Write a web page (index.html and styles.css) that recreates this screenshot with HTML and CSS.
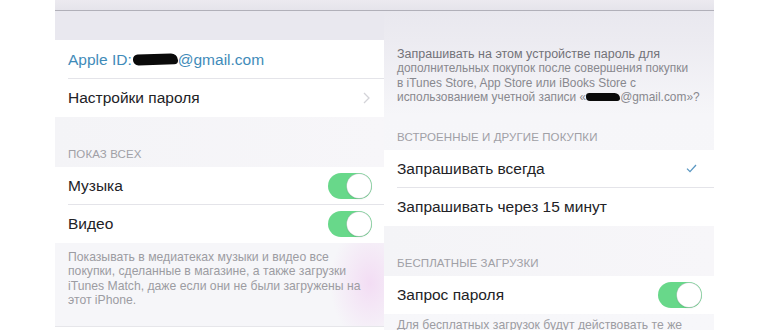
FILE: index.html
```html
<!DOCTYPE html>
<html lang="ru">
<head>
<meta charset="utf-8">
<link rel="stylesheet" href="styles.css">
</head>
<body>
<div class="screens">
  <section class="panel panel-left">
    <div class="topbar"></div>
    <div class="gap gap-top"></div>
    <div class="group">
      <div class="row row-first row-sep"><span class="blue">Apple ID:<span class="blot blot-a"></span>@gmail.com</span></div>
      <div class="row"><span>Настройки пароля</span>
        <svg class="chev" width="7" height="12" viewBox="0 0 7 12"><path d="M1 1l5 5-5 5" fill="none" stroke="#d3d3d8" stroke-width="1.3"/></svg>
      </div>
    </div>
    <div class="gap gap-header"><div class="header">ПОКАЗ ВСЕХ</div></div>
    <div class="group">
      <div class="row row-sep"><span>Музыка</span><span class="toggle"><span class="knob"></span></span></div>
      <div class="row"><span>Видео</span><span class="toggle"><span class="knob"></span></span></div>
    </div>
    <div class="footer footer-left">Показывать в медиатеках музыки и видео все<br>покупки, сделанные в магазине, а также загрузки<br>iTunes Match, даже если они не были загружены на<br>этот iPhone.</div>
  </section>
  <section class="panel panel-right">
    <div class="topbar"></div>
    <div class="desc-area">
      <div class="desc"><span class="desc-first">Запрашивать на этом устройстве пароль для</span><br>дополнительных покупок после совершения покупки<br>в iTunes Store, App Store или iBooks Store с<br>использованием учетной записи «<span class="blot blot-b"></span>@gmail.com»?</div>
      <div class="header header-first">ВСТРОЕННЫЕ И ДРУГИЕ ПОКУПКИ</div>
    </div>
    <div class="group">
      <div class="row row-sep"><span>Запрашивать всегда</span>
        <svg class="check" width="11" height="9" viewBox="0 0 11 9"><path d="M1 4.6l3 3L10 1" fill="none" stroke="#5a97c2" stroke-width="1.3"/></svg>
      </div>
      <div class="row"><span>Запрашивать через 15 минут</span></div>
    </div>
    <div class="gap gap-header"><div class="header">БЕСПЛАТНЫЕ ЗАГРУЗКИ</div></div>
    <div class="group">
      <div class="row"><span>Запрос пароля</span><span class="toggle"><span class="knob"></span></span></div>
    </div>
    <div class="footer footer-right">Для бесплатных загрузок будут действовать те же</div>
  </section>
</div>
</body>
</html>
```
FILE: styles.css
```css
* { box-sizing: border-box; }
html, body { margin: 0; padding: 0; background: #ffffff; }
body {
  font-family: "Liberation Sans", Arial, sans-serif;
  color: #222226;
  width: 770px;
  height: 330px;
  overflow: hidden;
}
.screens {
  display: flex;
  padding-left: 55px;
  align-items: flex-start;
}
.panel {
  width: 329px;
  height: 327px;
  background: #f5f5f8;
  display: flex;
  flex-direction: column;
  overflow: hidden;
}
.panel-left { border-bottom: 1px solid #e6e6ea; }
.panel-right {
  width: 330px;
  height: 330px;
  background: linear-gradient(#e8e7ee 0px, #ecebf1 40px, #f6f6f9 115px, #f7f7fa 330px);
}
.topbar {
  height: 11px;
  flex: none;
  background: linear-gradient(#eceaf0, #e5e4eb);
  border-bottom: 1px solid #b1b0b9;
}
.gap-top { height: 29px; background: #e9e8ef; flex: none; }
.group { background: #ffffff; flex: none; }
.row {
  height: 38px;
  display: flex;
  align-items: center;
  justify-content: space-between;
  padding: 0 13px;
  font-size: 15.5px;
  position: relative;
}
.row-first { height: 39px; }
.row-sep::after {
  content: "";
  position: absolute;
  left: 13px;
  right: 0;
  bottom: 0;
  height: 1px;
  background: #e4e4e9;
}
.blue { color: #3f8bb9; display: inline-flex; align-items: center; }
.blot {
  display: inline-block;
  background: #0a0a0a;
  vertical-align: middle;
}
.blot-a { width: 45px; height: 11px; border-radius: 6px 9px 5px 7px; margin: 0 0 0 1px; transform: rotate(-2deg); }
.blot-b { width: 34px; height: 8px; border-radius: 5px 8px 4px 6px; margin-top: -2px; }
.chev { margin-right: 1px; }
.check { margin-right: 4px; }
.gap-header {
  height: 50px;
  flex: none;
  display: flex;
  align-items: flex-end;
  background: linear-gradient(90deg, #f4f4f7, #f7f6f9);
}
.header {
  font-size: 11.5px;
  color: #a0a0a6;
  padding: 0 13px 6px;
  line-height: 14px;
  letter-spacing: 0.1px;
}
.toggle {
  width: 44px;
  height: 26px;
  border-radius: 13px;
  background: #68d88a;
  position: relative;
  flex: none;
  margin-right: -1px;
}
.knob {
  position: absolute;
  right: 1px;
  top: 1px;
  width: 24px;
  height: 24px;
  border-radius: 50%;
  background: #ffffff;
  box-shadow: 0 0 0 0.5px #c9c9cf, 0 1px 2px rgba(0,0,0,0.12);
}
.footer {
  font-size: 12.2px;
  line-height: 14.4px;
  color: #9c9ca2;
  padding: 7px 13px 0;
  white-space: nowrap;
}
.footer-left {
  flex: 1;
  background: radial-gradient(ellipse 40px 60px at 315px 40px, rgba(240,200,240,0.55), rgba(245,245,248,0) 100%), #f6f6f9;
}
.footer-right { padding-top: 4px; }
.desc-area {
  flex: none;
  padding-top: 36px;
}
.desc {
  font-size: 11.9px;
  line-height: 14.4px;
  color: #88888e;
  padding: 0 13px;
  white-space: nowrap;
}
.desc-first { font-size: 12.5px; color: #727278; }
.header-first { padding-top: 25px; padding-bottom: 6px; }
```
